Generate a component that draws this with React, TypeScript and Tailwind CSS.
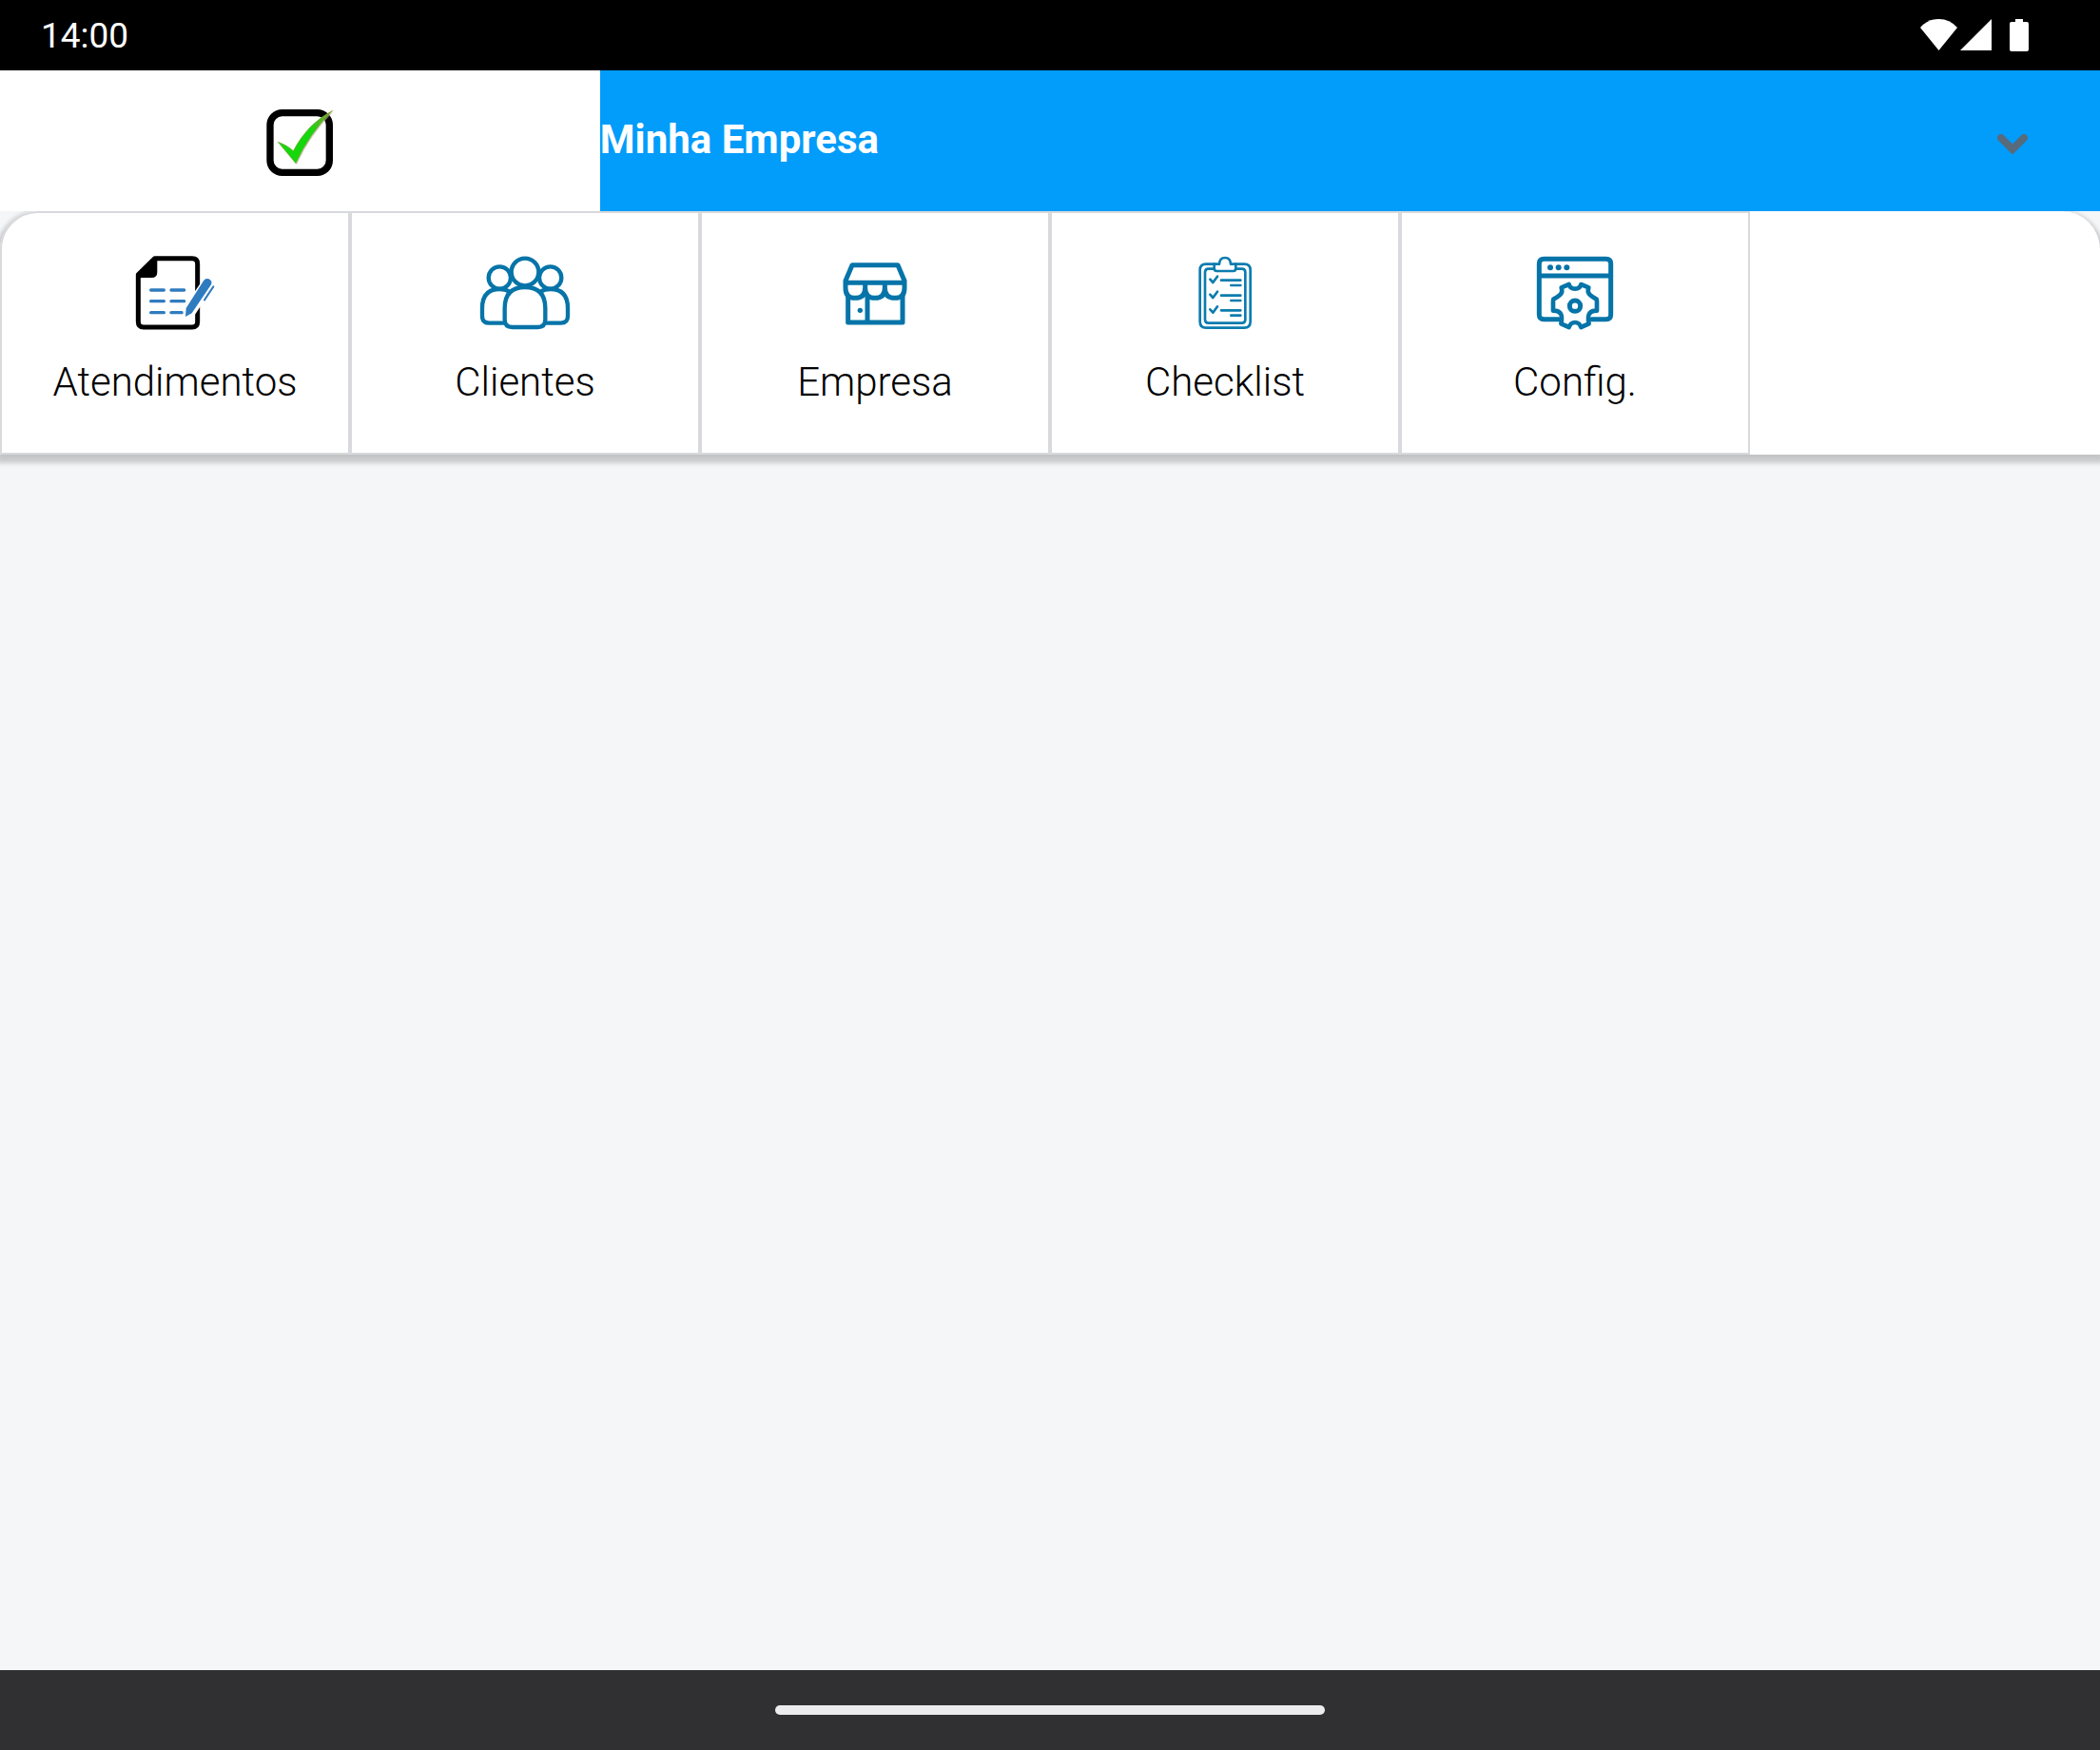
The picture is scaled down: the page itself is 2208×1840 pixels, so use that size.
import type { ReactNode } from "react"

const AtendimentosIcon = () => (
    <svg viewBox="48 54 288 240" className="h-20 w-24" fill="none">
        <path
            d="M128 65H246Q263 65 263 82V265Q263 282 246 282H93Q76 282 76 265V116Z"
            stroke="#000"
            strokeWidth="15"
            strokeLinejoin="round"
        />
        <path d="M126 60H136V108Q136 126 118 126H72V114Z" fill="#000" />
        <path
            d="M116 165H157M180 165H221M116 200H157M180 200H221M116 236H157M180 236H214"
            stroke="#2f7bbf"
            strokeWidth="10"
            strokeLinecap="round"
        />
        <path d="M290 118L218 222V256L250 250L274 214Z" fill="#fff" />
        <path
            d="M282 136Q288 126 299 130Q311 136 306 148L245 238L225 249L227 222Z"
            fill="#2f7bbf"
        />
        <path
            d="M313 154L285 196"
            stroke="#2f7bbf"
            strokeWidth="6"
            strokeLinecap="round"
        />
    </svg>
)

const ClientesIcon = () => (
    <svg
        viewBox="42 39 288 240"
        className="h-20 w-24"
        fill="none"
        stroke="#0674a8"
        strokeWidth="13"
        strokeLinecap="round"
    >
        <circle cx="186" cy="93" r="43" />
        <circle cx="106" cy="111" r="35" />
        <circle cx="266" cy="111" r="35" />
        <path d="M122 207Q122 141 186 141Q250 141 250 207V243Q250 267 226 267H146Q122 267 122 243Z" />
        <path d="M118 254H73Q51 254 51 232V207Q51 147 106 147Q124 147 137 155" />
        <path d="M254 254H299Q321 254 321 232V207Q321 147 266 147Q248 147 235 155" />
    </svg>
)

const EmpresaIcon = () => (
    <svg
        viewBox="6 24 288 240"
        className="h-20 w-24"
        fill="none"
        stroke="#0674a8"
        strokeWidth="15"
        strokeLinejoin="round"
    >
        <path d="M78 56H222L243 106V128Q243 160 213 160Q181 160 181 128V114V128Q181 160 150 160Q119 160 119 128V114V128Q119 160 87 160Q57 160 57 128V106Z" />
        <path d="M57 112H243" />
        <path d="M65 150V237H237V150M126 155V237" />
        <circle cx="103" cy="199" r="8" fill="#0674a8" stroke="none" />
    </svg>
)

const ChecklistIcon = () => (
    <svg
        viewBox="0 24 288 240"
        className="h-20 w-24"
        fill="none"
        stroke="#0c7cae"
        strokeWidth="8"
        strokeLinecap="round"
        strokeLinejoin="round"
    >
        <path d="M110 53H84Q65 53 65 72V235Q65 254 84 254H205Q224 254 224 235V72Q224 53 205 53H178" />
        <path d="M108 68H92Q81 68 81 79V228Q81 239 92 239H197Q208 239 208 228V79Q208 68 197 68H180" />
        <path d="M110 53H126Q127 33 144 33Q161 33 162 53H178V67Q178 75 170 75H118Q110 75 110 67Z" />
        <path d="M97 101L106 111L120 92M97 149L106 159L120 140M97 196L106 206L120 187" />
        <path d="M132 104H193M163 120H193M132 152H193M163 168H193M132 199H193M163 215H193" />
    </svg>
)

const ConfigIcon = () => (
    <svg
        viewBox="24 39 288 240"
        className="h-20 w-24"
        fill="none"
        stroke="#0674a8"
        strokeWidth="15"
        strokeLinejoin="round"
    >
        <path
            d="M116 242H70Q55 242 55 227V67Q55 52 70 52H266Q281 52 281 67V227Q281 242 266 242H221M55 105H281"
            strokeLinecap="round"
        />
        <g fill="#0674a8" stroke="none">
            <circle cx="90" cy="79" r="9" />
            <circle cx="116" cy="79" r="9" />
            <circle cx="142" cy="79" r="9" />
        </g>
        <path
            d="M149 132Q152 146 168 146Q184 146 187 132L211 142Q206 156 214 164Q222 172 236 179Q237 182 237 186V215Q222 214 214 223Q207 232 212 256L187 267Q182 252 168 252Q154 252 149 267L124 256Q129 232 122 223Q114 214 99 215V186Q99 182 100 179Q114 172 122 164Q130 156 125 142Z"
            fill="#fff"
            strokeWidth="14"
        />
        <circle cx="168" cy="200" r="17" />
    </svg>
)

const MenuItem = ({
    label,
    children,
    className = "",
}: {
    label: string
    children: ReactNode
    className?: string
}) => (
    <button
        className={`flex cursor-pointer flex-col items-center border-2 border-[#d8d9dc] bg-white pt-11 pb-[42px] ${className}`}
    >
        {children}
        <span className="mt-[22px] text-[42px] leading-[64px] font-light text-black">
            {label}
        </span>
    </button>
)

const StatusBar = () => (
    <div className="flex h-[74px] items-center justify-between bg-black pr-[75px] pl-[43px] text-white">
        <span className="text-[37px] leading-none">14:00</span>
        <div className="flex items-center fill-white">
            <svg viewBox="0 0 39 34" className="h-[34px] w-[39px]">
                <path d="M0 9Q8 0 19.500 0Q31 0 39 9L19.500 33Z" />
            </svg>
            <svg viewBox="0 0 33 34" className="ml-[3px] h-[34px] w-[33px]">
                <path d="M0 33L33 0V33Z" />
            </svg>
            <svg viewBox="0 0 20 34" className="ml-[19px] h-[34px] w-5">
                <path d="M6 0H14V3H18Q20 3 20 5V32Q20 34 18 34H2Q0 34 0 32V5Q0 3 2 3H6Z" />
            </svg>
        </div>
    </div>
)

const Header = () => (
    <header className="relative z-10 grid h-[148px] grid-cols-[2fr_5fr]">
        <div className="flex items-center justify-center bg-white pt-1">
            <svg viewBox="30 45 210 210" className="h-[70px] w-[70px]">
                <defs>
                    <linearGradient id="check" x1="0" y1="1" x2="1" y2="0">
                        <stop offset="0.6" stopColor="#14d80c" />
                        <stop offset="1" stopColor="#8a9a3c" />
                    </linearGradient>
                </defs>
                <rect
                    x="42"
                    y="56"
                    width="187"
                    height="188"
                    rx="38"
                    fill="none"
                    stroke="#000"
                    strokeWidth="22"
                />
                <path
                    d="M70 151L126 219Q168 126 242 52L226 62Q160 108 117 178Z"
                    fill="#b9aa96"
                    opacity="0.6"
                />
                <path
                    d="M67 148L123 215Q165 122 239 49Q160 90 115 176Q96 158 67 148Z"
                    fill="url(#check)"
                    stroke="#7fa030"
                    strokeWidth="2"
                />
            </svg>
        </div>
        <div className="relative bg-[#029cfb]">
            <select
                aria-label="Empresa"
                className="h-full w-full cursor-pointer appearance-none pb-1 text-[42px] font-bold text-white"
            >
                <option>Minha Empresa</option>
            </select>
            <svg
                viewBox="0 0 32 21"
                className="pointer-events-none absolute top-[67px] right-[76px] h-[21px] w-8"
                fill="none"
                stroke="#576b7c"
                strokeWidth="8"
                strokeLinecap="round"
            >
                <path d="M4 4L16 16L28 4" />
            </svg>
        </div>
    </header>
)

const App = () => {
    return (
        <div className="flex min-h-screen flex-col bg-[#f4f6f8] font-[Roboto,sans-serif]">
            <StatusBar />
            <Header />
            <nav className="grid grid-cols-6 rounded-t-[40px] bg-white shadow-[0_5px_5px_4px_rgba(0,0,0,0.18),0_0_6px_rgba(0,0,0,0.08)]">
                <MenuItem label="Atendimentos" className="rounded-tl-[40px]">
                    <AtendimentosIcon />
                </MenuItem>
                <MenuItem label="Clientes">
                    <ClientesIcon />
                </MenuItem>
                <MenuItem label="Empresa">
                    <EmpresaIcon />
                </MenuItem>
                <MenuItem label="Checklist">
                    <ChecklistIcon />
                </MenuItem>
                <MenuItem label="Config.">
                    <ConfigIcon />
                </MenuItem>
            </nav>
            <main className="flex-1" />
            <footer className="flex h-[84px] items-center justify-center bg-[#303032]">
                <div className="h-[10px] w-[578px] max-w-full rounded-full bg-[#ececee]" />
            </footer>
        </div>
    )
}

export default App
